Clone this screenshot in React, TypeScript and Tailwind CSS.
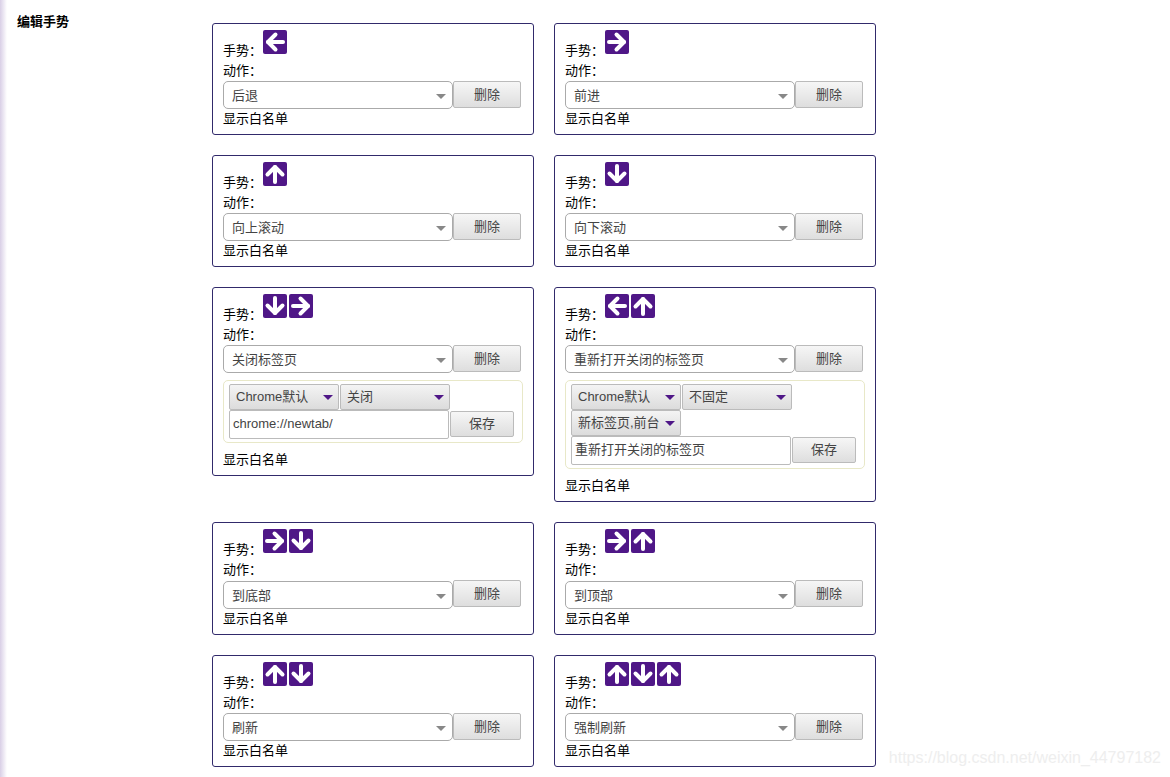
const FONT = 'font-["Liberation_Sans","Noto_Sans_CJK_SC",sans-serif]';

type Dir = 'left' | 'right' | 'up' | 'down';

// one purple gesture tile, the arrow is drawn pointing left and rotated
function Arrow({ dir }: { dir: Dir }) {
  const rot = { left: 0, up: 90, right: 180, down: 270 }[dir];
  return (
    <svg width="24" height="24" viewBox="0 0 24 24" className="block shrink-0">
      <rect width="24" height="24" rx="2" fill="#4f1787" />
      <g transform={`rotate(${rot} 12 12)`} fill="none" stroke="#fff" strokeWidth="4" strokeLinecap="round" strokeLinejoin="round">
        <path d="M5 12H20" />
        <path d="M12.5 4.5L5 12L12.5 19.5" />
      </g>
    </svg>
  );
}

function GrayButton({ label, className }: { label: string; className: string }) {
  return (
    <button className={`shrink-0 rounded-[2px] border border-[#bbb] bg-gradient-to-b from-[#f6f6f6] to-[#dedede] text-[13px] text-[#444] text-center ${className}`}>
      {label}
    </button>
  );
}

function Dropdown({ label }: { label: string }) {
  return (
    <div className="flex items-center justify-between w-[110px] h-[26px] pl-[6px] pr-[5px] rounded-[2px] border border-[#bbb] bg-gradient-to-b from-[#f4f4f4] to-[#dcdcdc] text-[13px] text-[#444] whitespace-nowrap">
      <span>{label}</span>
      <span className="w-0 h-0 border-x-[5px] border-x-transparent border-t-[5px] border-t-[#4f1787]" />
    </div>
  );
}

interface GestureProps {
  dirs: Dir[];
  action: string;
  nudge?: boolean;
  extra?: { menus: string[]; value: string };
}

function GestureCard({ dirs, action, nudge, extra }: GestureProps) {
  return (
    <div className="border border-[#312a6b] rounded-[3px] pl-[10px] pr-[12px] pt-[6px] pb-[6px] text-[13px] leading-[20px] text-black">
      <div className="flex items-end h-[27px]">
        <span className="w-[40px] leading-[18px] translate-y-[3px]">手势：</span>
        <div className="flex gap-[2px] self-start">
          {dirs.map((d, i) => <Arrow key={i} dir={d} />)}
        </div>
      </div>
      <div className="h-[24px] leading-[21px] pt-[3px]">动作：</div>
      <div className="flex items-start">
        <div className={`flex items-center justify-between w-[230px] h-[28px] pl-[8px] pr-[6px] pt-[2px] rounded-[5px] border border-[#aaa] bg-white text-[#444] ${nudge ? 'mt-[1px]' : ''}`}>
          <span>{action}</span>
          <span className="w-0 h-0 border-x-[5px] border-x-transparent border-t-[5px] border-t-[#888]" />
        </div>
        <GrayButton label="删除" className="w-[68px] h-[27px]" />
      </div>
      {extra && (
        <div className="w-[300px] mt-[7px] mb-[8px] border border-[#e8e8c8] rounded-[5px] pl-[5px] pt-[3px] pb-[3px]">
          <div className="flex flex-wrap gap-x-[1px] w-[225px]">
            {extra.menus.map((m) => <Dropdown key={m} label={m} />)}
          </div>
          <div className="flex items-start gap-[1px]">
            <div className="w-[220px] h-[29px] px-[3px] leading-[26px] rounded-[2px] border border-[#bbb] bg-white text-[#444]">{extra.value}</div>
            <GrayButton label="保存" className="w-[64px] h-[26px] mt-[1px]" />
          </div>
        </div>
      )}
      <div className="h-[18px] leading-[18px] mt-[1px]">显示白名单</div>
    </div>
  );
}

const gestures: GestureProps[] = [
  { dirs: ['left'], action: '后退' },
  { dirs: ['right'], action: '前进' },
  { dirs: ['up'], action: '向上滚动' },
  { dirs: ['down'], action: '向下滚动' },
  { dirs: ['down', 'right'], action: '关闭标签页', extra: { menus: ['Chrome默认', '关闭'], value: 'chrome://newtab/' } },
  { dirs: ['left', 'up'], action: '重新打开关闭的标签页', extra: { menus: ['Chrome默认', '不固定', '新标签页,前台'], value: '重新打开关闭的标签页' } },
  { dirs: ['right', 'down'], action: '到底部', nudge: true },
  { dirs: ['right', 'up'], action: '到顶部', nudge: true },
  { dirs: ['up', 'down'], action: '刷新' },
  { dirs: ['up', 'down', 'up'], action: '强制刷新' },
];

export default function App() {
  return (
    <div className={`relative flex h-[777px] w-[1170px] overflow-hidden bg-white ${FONT}`}>
      {/* left edge shade */}
      <div className="w-[7px] shrink-0 bg-gradient-to-r from-[#d9cfe6] to-white" />
      <div className="w-[205px] shrink-0 pl-[10px] pt-[14px] text-[13px] leading-[16px] font-bold text-black">编辑手势</div>
      <div className="grid grid-cols-[322px_322px] gap-x-[20px] gap-y-[20px] items-start content-start pt-[23px]">
        {gestures.map((g) => <GestureCard key={g.action} {...g} />)}
      </div>
      <div className="absolute right-[9px] bottom-[9px] text-[16px] leading-[20px] text-[#eeeeee]">https://blog.csdn.net/weixin_44797182</div>
    </div>
  );
}
